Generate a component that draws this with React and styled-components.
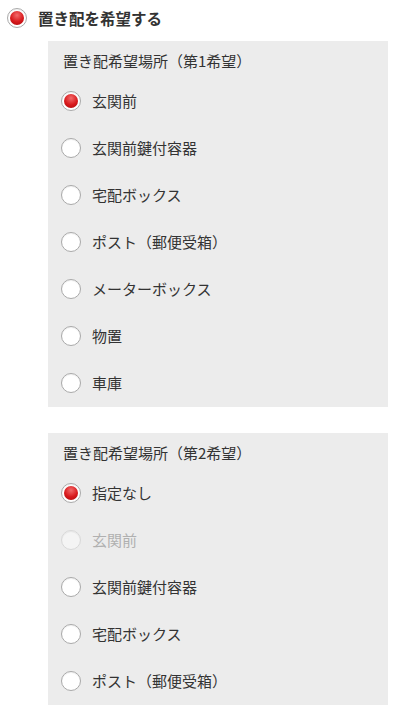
import React from "react";
import styled, { createGlobalStyle } from "styled-components";

const Global = createGlobalStyle`
  html, body { margin: 0; padding: 0; background: #fff; }
  body { font-family: "Noto Sans CJK JP", "Noto Sans", sans-serif; color: #333; }
`;

const Page = styled.div`
  padding: 7px 17px 0 7px;
`;

const HeadRow = styled.label`
  display: flex;
  align-items: center;
  gap: 11px;
  height: 22px;
  font-size: 15.5px;
  font-weight: 700;
  color: #333;
`;

const Radio = styled.span`
  box-sizing: border-box;
  flex: none;
  width: 20px;
  height: 20px;
  border-radius: 50%;
  border: 1px solid ${(p) => (p.$disabled ? "#d8d8d8" : "#a9a9a9")};
  background: ${(p) => (p.$disabled ? "#f4f4f4" : "#fff")};
  display: flex;
  align-items: center;
  justify-content: center;
  box-shadow: inset 0 1px 1px rgba(0,0,0,0.06);
  &::after {
    content: "";
    display: ${(p) => (p.$checked ? "block" : "none")};
    width: 14px;
    height: 14px;
    border-radius: 50%;
    background: radial-gradient(circle at 50% 30%, #f26a6a 0%, #d8191c 55%, #a80a0c 100%);
  }
`;

const Panel = styled.div`
  margin: ${(p) => p.$mt}px 0 0 41px;
  background: #ececec;
  padding: 8px 14px 1px 13px;
`;

const PanelLabel = styled.div`
  font-size: 15px;
  line-height: 24px;
  margin: 0 0 4px 2px;
  color: #333;
`;

const Row = styled.label`
  display: flex;
  align-items: center;
  gap: 11px;
  height: 47px;
  font-size: 15px;
  color: ${(p) => (p.$disabled ? "#b0b0b0" : "#333")};
`;

const Item = ({ label, checked, disabled }) => (
  <Row $disabled={disabled}>
    <Radio $checked={checked} $disabled={disabled} />
    <span>{label}</span>
  </Row>
);

const first = ["玄関前", "玄関前鍵付容器", "宅配ボックス", "ポスト（郵便受箱）", "メーターボックス", "物置", "車庫"];
const second = ["指定なし", "玄関前", "玄関前鍵付容器", "宅配ボックス", "ポスト（郵便受箱）"];

export default function App() {
  return (
    <>
      <Global />
      <Page>
        <HeadRow>
          <Radio $checked />
          <span>置き配を希望する</span>
        </HeadRow>
        <Panel $mt={12}>
          <PanelLabel>置き配希望場所（第1希望）</PanelLabel>
          {first.map((l, i) => (
            <Item key={l} label={l} checked={i === 0} />
          ))}
        </Panel>
        <Panel $mt={26}>
          <PanelLabel>置き配希望場所（第2希望）</PanelLabel>
          {second.map((l, i) => (
            <Item key={l} label={l} checked={i === 0} disabled={i === 1} />
          ))}
        </Panel>
      </Page>
    </>
  );
}
